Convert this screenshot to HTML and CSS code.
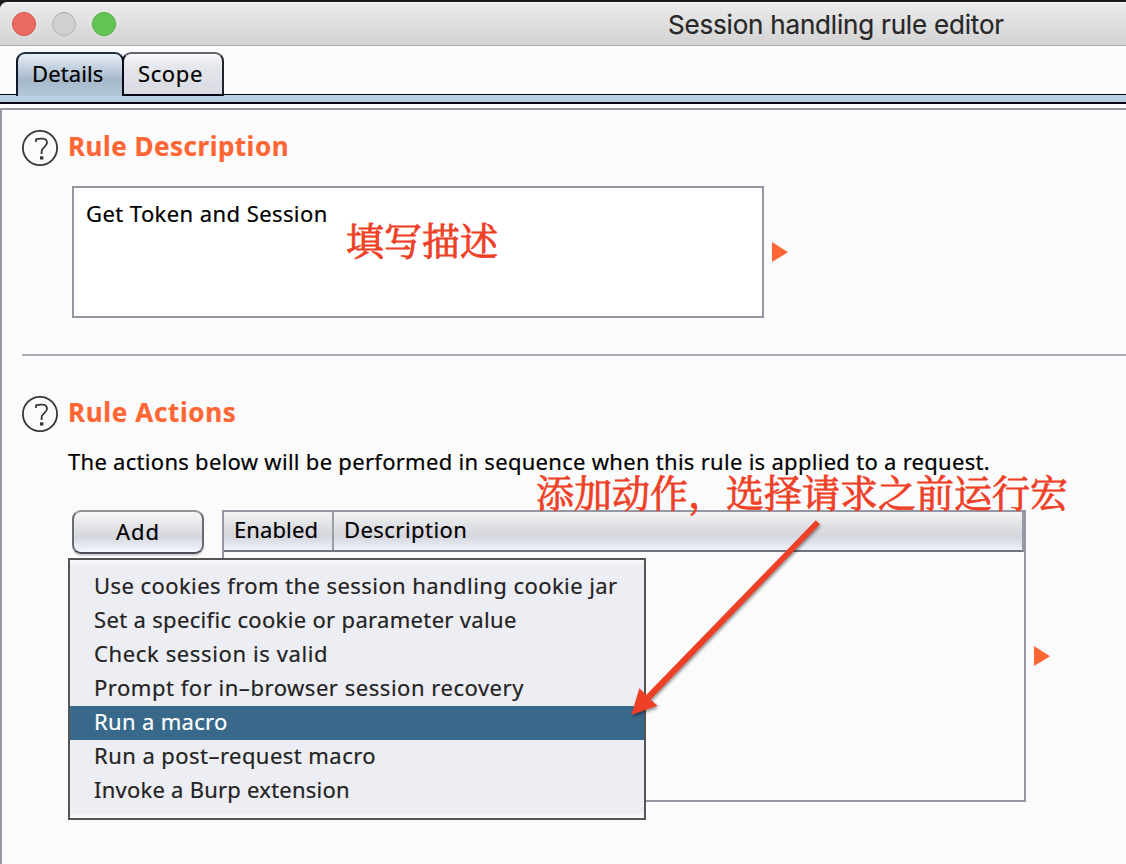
FILE: index.html
```
<!DOCTYPE html>
<html lang="zh">
<head>
<meta charset="utf-8">
<title>Session handling rule editor</title>
<link rel="stylesheet" href="styles.css">
</head>
<body>
<div class="window">
  <header class="titlebar">
    <div class="lights">
      <span class="light light-close"></span>
      <span class="light light-min"></span>
      <span class="light light-max"></span>
    </div>
    <h1 class="title">Session handling rule editor</h1>
  </header>
  <nav class="tabs">
    <div class="tab tab-active">Details</div>
    <div class="tab tab-scope">Scope</div>
  </nav>
  <div class="tab-rail"></div>
  <main class="pane">
    <section class="description">
      <div class="heading">
        <svg class="help" viewBox="0 0 36 36"><circle cx="18" cy="18" r="17.1"/><path d="M14 12V9.4C17.5 8.2 25 7.6 25 12.5C25 17 19.6 17.2 19.6 21.5V24"/><path class="dot" d="M18 26.3h3.4v3.2H18z"/></svg>
        <h2 class="h-description">Rule Description</h2>
      </div>
      <div class="field-row">
        <div class="textarea">Get Token and Session</div>
        <svg class="marker" viewBox="0 0 16 20"><path d="M0 0L16 10.3L0 20Z"/></svg>
      </div>
    </section>
    <section class="actions">
      <div class="heading">
        <svg class="help" viewBox="0 0 36 36"><circle cx="18" cy="18" r="17.1"/><path d="M14 12V9.4C17.5 8.2 25 7.6 25 12.5C25 17 19.6 17.2 19.6 21.5V24"/><path class="dot" d="M18 26.3h3.4v3.2H18z"/></svg>
        <h2 class="h-actions">Rule Actions</h2>
      </div>
      <p class="intro">The actions below will be performed in sequence when this rule is applied to a request.</p>
      <div class="table-row">
        <div class="button">Add</div>
        <div class="table">
          <div class="thead">
            <div class="th th-enabled">Enabled</div>
            <div class="th th-description">Description</div>
          </div>
        </div>
        <svg class="marker" viewBox="0 0 16 20"><path d="M0 0L16 10.3L0 20Z"/></svg>
      </div>
    </section>
  </main>
  <ul class="menu">
    <li>Use cookies from the session handling cookie jar</li>
    <li>Set a specific cookie or parameter value</li>
    <li>Check session is valid</li>
    <li>Prompt for in–browser session recovery</li>
    <li class="selected">Run a macro</li>
    <li>Run a post–request macro</li>
    <li>Invoke a Burp extension</li>
  </ul>
  <div class="note note-description">填写描述</div>
  <div class="note note-actions">添加动作，选择请求之前运行宏</div>
  <svg class="arrow" viewBox="0 0 220 220"><path d="M215.8 10.3L219.8 14.2L50.6 189.4L57.4 195.7L31.3 205L39.4 178.3L46.2 185Z"/></svg>
</div>
</body>
</html>
```
FILE: styles.css
```
* { box-sizing: border-box; }
body {
  margin: 0;
  background: #1c1a1b;
  font: 22px/30px "Noto Sans", "Open Sans", sans-serif;
  color: #000;
  -webkit-text-stroke: .2px;
}
.window {
  position: relative;
  width: 1126px;
  height: 864px;
  padding-top: 2px;
  overflow: hidden;
}
.titlebar {
  height: 44px;
  display: flex;
  align-items: center;
  padding-left: 12px;
  border-top: 1px solid #f6f6f6;
  border-bottom: 1px solid #acacac;
  border-top-left-radius: 7px;
  background: linear-gradient(#ebebeb, #d3d3d3);
}
.lights { display: flex; gap: 16px; width: 656px; }
.light { width: 24px; height: 24px; border-radius: 50%; border: 1px solid; }
.light-close { background: #ec6b60; border-color: #d25349; }
.light-min { background: #d0d0d0; border-color: #b0b0b0; }
.light-max { background: #61c554; border-color: #52a842; }
.title {
  margin: 0;
  padding-top: 2px;
  font: 400 26px/32px Inter, sans-serif;
  letter-spacing: -.19px;
  color: #272727;
}
.tabs {
  display: flex;
  height: 48px;
  padding: 6px 0 0 16px;
  background: #fbfbfb;
}
.tab {
  height: 44px;
  padding: 4px 0 0 14px;
  border: 2px solid;
  border-radius: 9px 9px 0 0;
  position: relative;
}
.tab-active {
  width: 108px;
  letter-spacing: .1px;
  border-color: #203347 #0a0a1c #b5cadd #0d1829;
  border-bottom: 0;
  background: linear-gradient(#e9eff4 0, #cbd8e3 25%, #a5b9cb 62%, #b3c7da 100%);
}
.tab-scope {
  width: 102px;
  margin-left: -2px;
  letter-spacing: .6px;
  border-color: #62656f #21232d #090919 #0a0a1c;
  background: linear-gradient(#f9f9fa 0, #e6e7ec 30%, #d9dae2 100%);
}
.tab-rail {
  height: 14px;
  background: linear-gradient(#080818 1px, #b9cfe4 1px, #b9cfe4 8px, #070718 8px, #070718 10px, #fff 10px);
}
.pane {
  height: 756px;
  border-top: 2px solid #9297a3;
  border-left: 2px solid #9297a3;
  background: #fbfbfb;
  padding-left: 20px;
}
.description { height: 246px; padding-top: 20px; border-bottom: 2px solid #a9adb8; }
.actions { padding-top: 40px; }
.heading { display: flex; gap: 10px; height: 36px; }
.help { width: 36px; height: 36px; fill: none; stroke: #373733; stroke-width: 1.8; }
.help .dot { fill: #373733; stroke: none; }
h2 { margin: 0; font-size: 26px; line-height: 32px; color: #ff6633; }
.h-description { letter-spacing: .5px; }
.h-actions { letter-spacing: .65px; }
.field-row { display: flex; align-items: center; gap: 8px; padding: 20px 0 0 50px; }
.textarea {
  width: 692px;
  height: 132px;
  padding: 10px 0 0 12px;
  border: 2px solid #9297a3;
  background: #fff;
  letter-spacing: .42px;
}
.marker { width: 16px; height: 20px; fill: #ff6633; }
.intro { margin: 14px 0 0 46px; letter-spacing: .29px; white-space: nowrap; }
.table-row { display: flex; padding: 34px 0 0 50px; }
.button {
  width: 132px;
  height: 44px;
  padding-top: 4px;
  margin-right: 18px;
  text-align: center;
  letter-spacing: 1px;
  border: 2px solid;
  border-color: #92959a #686b74 #4c4d57 #686b74;
  border-radius: 9px;
  background: linear-gradient(#f7f7f8 0, #dedfe2 45%, #d5d7de 62%, #f6f7ff 100%);
  box-shadow: 0 2px 1px #d4d4d4;
}
.table { width: 804px; height: 292px; border: 2px solid #9297a3; }
.thead {
  display: flex;
  height: 40px;
  border-bottom: 2px solid #71747e;
  border-right: 2px solid #969aa6;
  background: linear-gradient(#f4f4f5 0, #dedfe2 40%, #d5d7de 65%, #eff1fb 100%);
}
.th { padding: 2px 0 0 10px; }
.th-enabled { width: 110px; border-right: 2px solid #9b9ea8; letter-spacing: .1px; }
.th-description { letter-spacing: .45px; }
.table-row .marker { margin: 136px 0 0 8px; }
.menu {
  position: absolute;
  left: 68px;
  top: 558px;
  width: 578px;
  height: 262px;
  margin: 0;
  padding: 10px 0;
  list-style: none;
  border: 2px solid #555;
  background: linear-gradient(#fafafb 0, #edeef3 6px, #edeef3 252px, #fafafb 258px);
  color: #232323;
}
.menu li { height: 34px; padding-left: 24px; line-height: 31px; white-space: nowrap; letter-spacing: .33px; }
.menu li:nth-child(1) { letter-spacing: .43px; }
.menu li:nth-child(2) { letter-spacing: .33px; }
.menu li:nth-child(3) { letter-spacing: .62px; }
.menu li:nth-child(4) { letter-spacing: .53px; }
.menu li:nth-child(6) { letter-spacing: .45px; }
.menu li:nth-child(7) { letter-spacing: .24px; }
.menu .selected { background: #38698a; color: #fff; }
.note {
  position: absolute;
  font: 38px/44px "Noto Serif CJK SC", serif;
  color: #ee4026;
  white-space: nowrap;
  -webkit-text-stroke: .8px #ee4026;
}
.note-description { left: 346px; top: 217px; }
.note-actions { left: 536px; top: 469px; }
.arrow {
  position: absolute;
  left: 600px;
  top: 510px;
  width: 220px;
  height: 220px;
  overflow: visible;
  fill: #ee4026;
  filter: drop-shadow(1px 2px 1.5px rgba(0, 0, 0, .4));
}
```
